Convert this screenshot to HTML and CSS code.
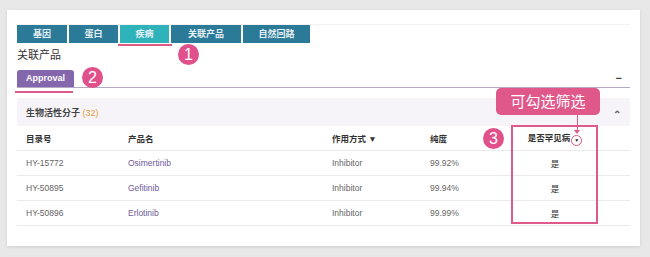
FILE: index.html
```html
<!DOCTYPE html>
<html>
<head>
  <title>关联产品</title>
  <link rel="stylesheet" href="styles.css">
</head>
<body>
  <div class="card">
    <div class="tabs">
      <div class="tab w50">基因</div>
      <div class="tab w49">蛋白</div>
      <div class="tab w49 active">疾病</div>
      <div class="tab w70">关联产品</div>
      <div class="tab w67">自然回路</div>
    </div>

    <h2 class="title">关联产品</h2>

    <div class="subtabs">
      <div class="subtab">Approval</div>
      <span class="collapse">&minus;</span>
    </div>

    <div class="panel">
      <div class="panel-head">
        <span>生物活性分子 <em>(32)</em></span>
        <span class="chevron">&#8963;</span>
      </div>

      <div class="row head">
        <div class="cell">目录号</div>
        <div class="cell">产品名</div>
        <div class="cell">作用方式 &#9660;</div>
        <div class="cell">纯度</div>
        <div class="cell center">是否罕见病<span class="filter">&#9660;</span></div>
        <div class="cell"></div>
      </div>
      <div class="row">
        <div class="cell">HY-15772</div>
        <div class="cell name">Osimertinib</div>
        <div class="cell">Inhibitor</div>
        <div class="cell">99.92%</div>
        <div class="cell center yes">是</div>
        <div class="cell"></div>
      </div>
      <div class="row">
        <div class="cell">HY-50895</div>
        <div class="cell name">Gefitinib</div>
        <div class="cell">Inhibitor</div>
        <div class="cell">99.94%</div>
        <div class="cell center yes">是</div>
        <div class="cell"></div>
      </div>
      <div class="row">
        <div class="cell">HY-50896</div>
        <div class="cell name">Erlotinib</div>
        <div class="cell">Inhibitor</div>
        <div class="cell">99.99%</div>
        <div class="cell center yes">是</div>
        <div class="cell"></div>
      </div>
    </div>

    <!-- annotations drawn over the page -->
    <div class="mark line1"></div>
    <div class="mark line2"></div>
    <div class="num n1">1</div>
    <div class="num n2">2</div>
    <div class="num n3">3</div>
    <div class="colbox"></div>
    <div class="tip">可勾选筛选</div>
    <div class="pointer"></div>
  </div>
</body>
</html>
```

FILE: styles.css
```css
body {
  margin: 0;
  padding: 0;
  background-color: #e8e8e8;
  font-family: "Liberation Sans", "Noto Sans CJK SC", sans-serif;
  color: #555;
}

.card {
  position: relative;
  margin: 10px 10px 12px 7px;
  width: 613px;
  padding: 14px 10px 20px 10px;
  background: #fff;
  box-shadow: 0 1px 3px rgba(0, 0, 0, 0.12);
}

.tabs {
  display: flex;
  gap: 2px;
  border-top: 1px solid #f2f2f2;
}

.tab {
  height: 18px;
  line-height: 18px;
  background: #2b7b98;
  color: #e6f0f4;
  font-size: 9px;
  font-weight: bold;
  text-align: center;
}

.tab.active {
  background: #2fb3bb;
}

.w50 { width: 50px; }
.w49 { width: 49px; }
.w70 { width: 70px; }
.w67 { width: 67px; }

.title {
  margin: 5px 0 0 0;
  font-size: 11px;
  line-height: 14px;
  font-weight: normal;
  color: #333;
}

.subtabs {
  display: flex;
  justify-content: space-between;
  align-items: flex-end;
  margin-top: 8px;
  border-bottom: 1px solid #b5a9c6;
}

.subtab {
  height: 17px;
  line-height: 17px;
  padding: 0 9px;
  background: #8466ad;
  color: #fff;
  font-size: 9px;
  font-weight: bold;
  border-radius: 3px 3px 0 0;
}

.collapse {
  margin-right: 8px;
  margin-bottom: 5px;
  font-size: 11px;
  font-weight: bold;
  line-height: 8px;
  color: #444;
}

.panel {
  margin-top: 10px;
}

.panel-head {
  display: flex;
  justify-content: space-between;
  align-items: center;
  height: 28px;
  padding: 0 9px;
  background: #f6f4f8;
  font-size: 9px;
  font-weight: bold;
  color: #444;
}

.panel-head em {
  font-style: normal;
  font-weight: normal;
  color: #e59a3a;
}

.chevron {
  font-size: 10px;
  color: #666;
  padding-top: 4px;
}

.row {
  display: grid;
  grid-template-columns: 102px 204px 98px 91px 86px 32px;
  height: 24px;
  align-items: center;
  border-bottom: 1px solid #ebebeb;
  font-size: 8.5px;
  color: #666;
}

.row.head {
  font-weight: bold;
  color: #333;
}

.cell {
  padding-left: 9px;
  white-space: nowrap;
}

.cell.center {
  padding-left: 0;
  text-align: center;
}

.name {
  color: #6d5a9c;
}

.yes {
  color: #333;
}

.filter {
  display: inline-block;
  width: 9px;
  height: 9px;
  margin-left: 1px;
  line-height: 9px;
  border: 1px solid #d9578a;
  border-radius: 50%;
  font-size: 5px;
  text-align: center;
  color: #222;
  vertical-align: -1px;
}

/* annotations */
.mark {
  position: absolute;
  height: 2px;
  background: #de5a8a;
}

.line1 {
  left: 111px;
  top: 34px;
  width: 54px;
}

.line2 {
  left: 8px;
  top: 81px;
  width: 58px;
}

.num {
  position: absolute;
  width: 21px;
  height: 21px;
  line-height: 21px;
  border-radius: 50%;
  background: #e0508a;
  color: #fff;
  font-size: 16px;
  text-align: center;
  font-family: "Liberation Sans", sans-serif;
}

.n1 { left: 171px; top: 34px; }
.n2 { left: 75px; top: 57px; }
.n3 { left: 476px; top: 118px; }

.colbox {
  position: absolute;
  left: 504px;
  top: 115px;
  width: 83px;
  height: 95px;
  border: 2px solid #de5a8a;
}

.tip {
  position: absolute;
  left: 489px;
  top: 78px;
  width: 104px;
  height: 27px;
  line-height: 27px;
  border-radius: 5px;
  background: #e0588a;
  color: #fff;
  font-size: 15px;
  text-align: center;
}

.pointer {
  position: absolute;
  left: 570px;
  top: 105px;
  width: 1px;
  height: 17px;
  background: #de5a8a;
}

.pointer::after {
  content: "";
  position: absolute;
  left: -3px;
  bottom: -2px;
  border-left: 3.5px solid transparent;
  border-right: 3.5px solid transparent;
  border-top: 4px solid #de5a8a;
}
```
